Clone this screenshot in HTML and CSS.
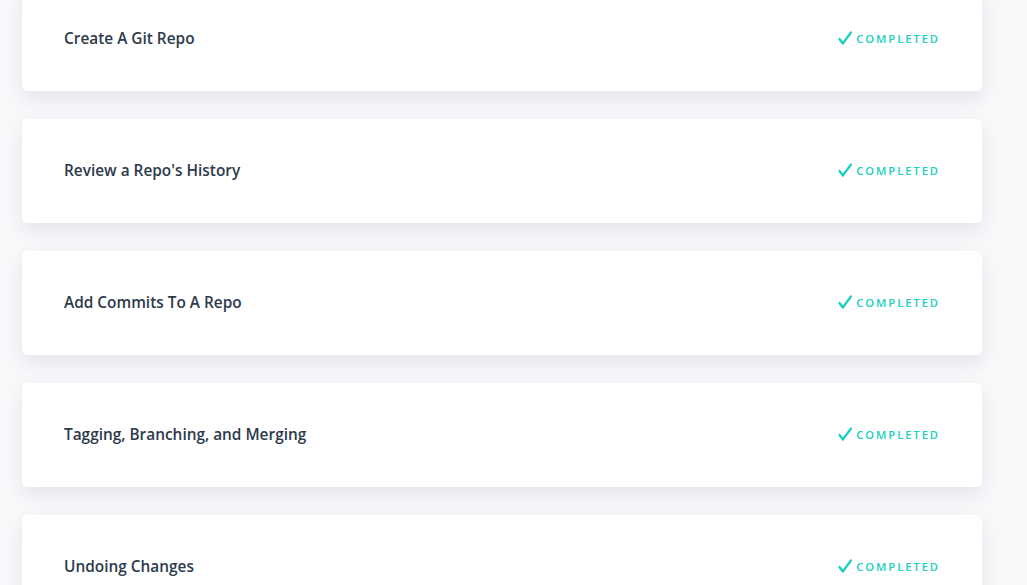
FILE: index.html
```html
<!DOCTYPE html>
<html>
<head>
<meta charset="utf-8">
<link rel="stylesheet" href="styles.css">
</head>
<body>
<div class="list">
  <div class="card"><span class="title">Create A Git Repo</span><span class="status"><svg class="check" viewBox="0 0 14 14"><path d="M1.5 8 L4.8 12.5 L13 1.5"/></svg>COMPLETED</span></div>
  <div class="card"><span class="title">Review a Repo's History</span><span class="status"><svg class="check" viewBox="0 0 14 14"><path d="M1.5 8 L4.8 12.5 L13 1.5"/></svg>COMPLETED</span></div>
  <div class="card"><span class="title">Add Commits To A Repo</span><span class="status"><svg class="check" viewBox="0 0 14 14"><path d="M1.5 8 L4.8 12.5 L13 1.5"/></svg>COMPLETED</span></div>
  <div class="card"><span class="title">Tagging, Branching, and Merging</span><span class="status"><svg class="check" viewBox="0 0 14 14"><path d="M1.5 8 L4.8 12.5 L13 1.5"/></svg>COMPLETED</span></div>
  <div class="card"><span class="title">Undoing Changes</span><span class="status"><svg class="check" viewBox="0 0 14 14"><path d="M1.5 8 L4.8 12.5 L13 1.5"/></svg>COMPLETED</span></div>
</div>
</body>
</html>
```
FILE: styles.css
```css
html, body {
  margin: 0;
  padding: 0;
  background: #f8f9fb;
  overflow: hidden;
  height: 585px;
}
body {
  font-family: "Open Sans", "Liberation Sans", sans-serif;
}
.list {
  display: flex;
  flex-direction: column;
  gap: 28px;
  width: 960px;
  margin: -13px 0 0 22px;
}
.card {
  background: #ffffff;
  height: 104px;
  border-radius: 5px;
  box-shadow: 0 8px 20px rgba(40, 50, 70, 0.10);
  display: flex;
  align-items: center;
  justify-content: space-between;
  padding: 0 42px 2px 42px;
  box-sizing: border-box;
}
.title {
  font-size: 15.4px;
  font-weight: 600;
  color: #2d3a4b;
}
.status {
  display: flex;
  align-items: center;
  font-size: 11.2px;
  font-weight: 600;
  letter-spacing: 1.95px;
  color: #17d0c1;
}
.check {
  width: 14px;
  height: 14px;
  margin-right: 4px;
  fill: none;
  stroke: #17d0c1;
  stroke-width: 2.2;
  stroke-linecap: round;
  stroke-linejoin: round;
}
```
